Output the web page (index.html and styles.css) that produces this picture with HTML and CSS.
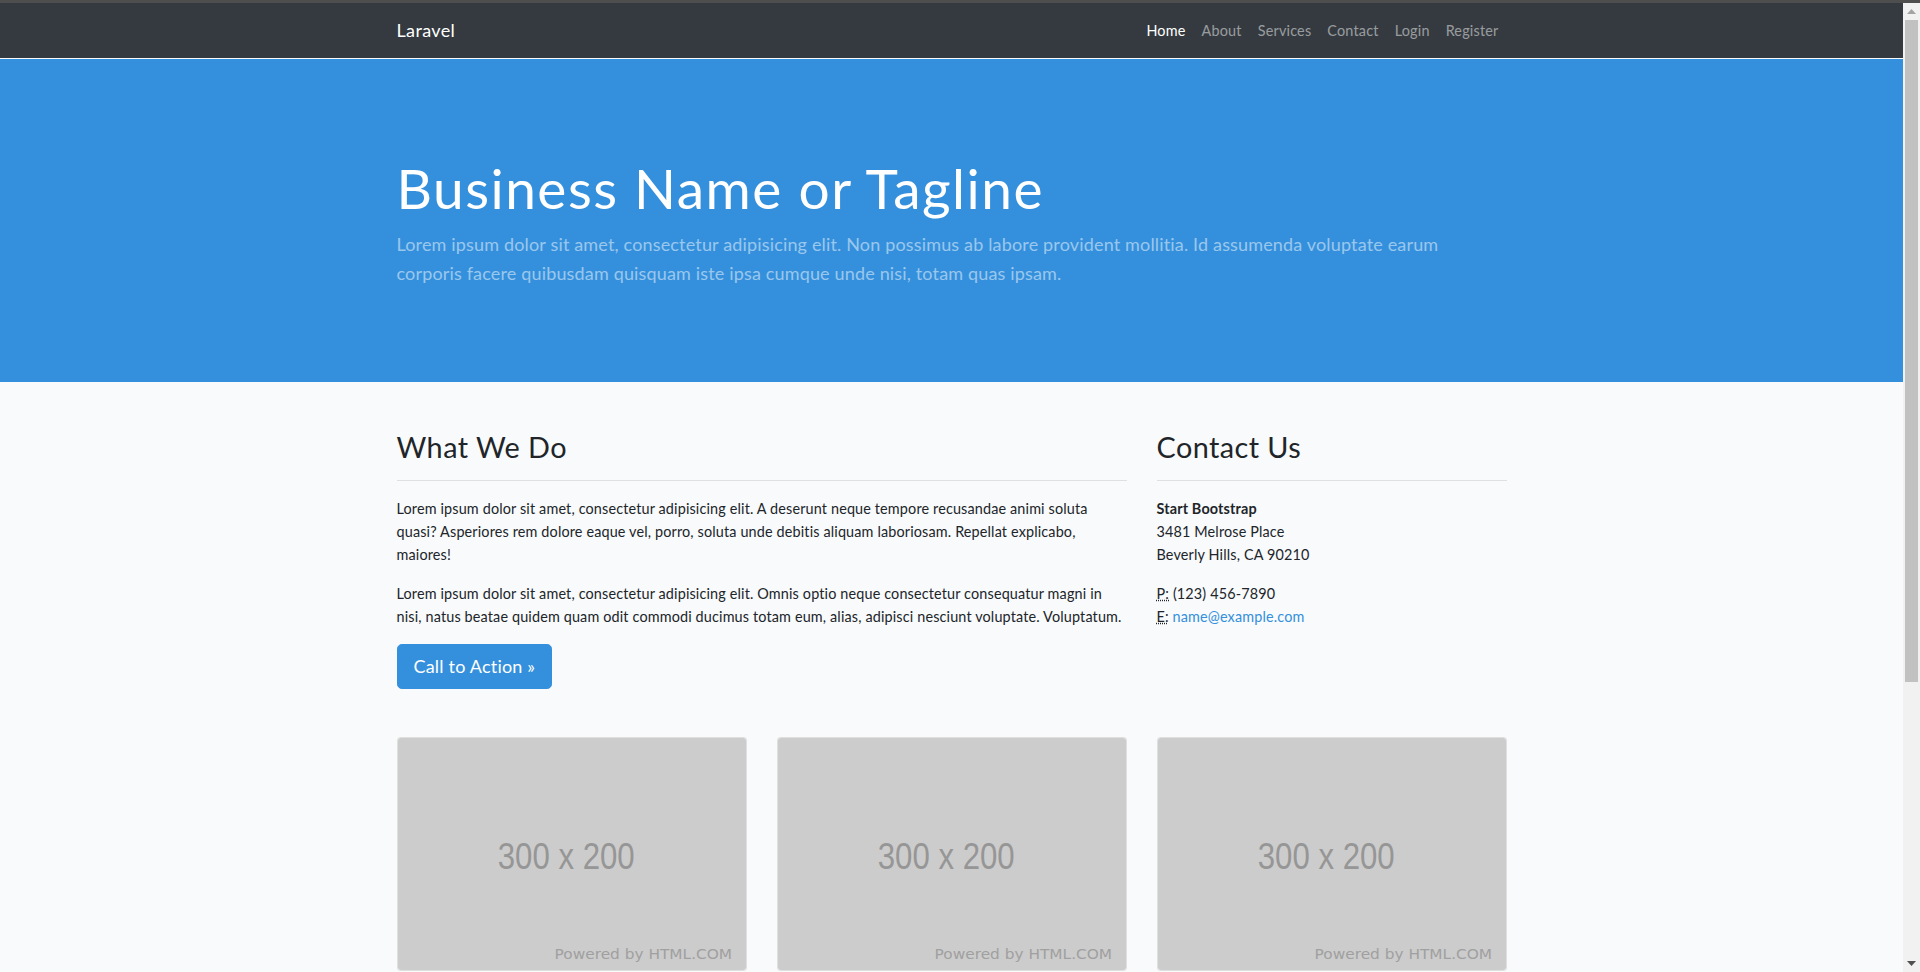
FILE: index.html
```html
<!DOCTYPE html>
<html lang="en">
<head>
<meta charset="utf-8">
<title>Laravel</title>
<link rel="stylesheet" href="styles.css">
</head>
<body>
<div class="topline"></div>
<div class="frame">
  <div class="page">
    <nav class="navbar">
      <div class="container nav-inner">
        <a class="brand" href="#">Laravel</a>
        <ul class="nav">
          <li><a class="active" href="#">Home</a></li>
          <li><a href="#">About</a></li>
          <li><a href="#">Services</a></li>
          <li><a href="#">Contact</a></li>
          <li><a href="#">Login</a></li>
          <li><a href="#">Register</a></li>
        </ul>
      </div>
    </nav>

    <header class="hero">
      <div class="container">
        <h1 class="hero-title">Business Name or Tagline</h1>
        <p class="lead">Lorem ipsum dolor sit amet, consectetur adipisicing elit. Non possimus ab labore provident mollitia. Id assumenda voluptate earum corporis facere quibusdam quisquam iste ipsa cumque unde nisi, totam quas ipsam.</p>
      </div>
    </header>

    <main class="container content">
      <div class="row-top">
        <section class="col">
          <h2>What We Do</h2>
          <hr>
          <p>Lorem ipsum dolor sit amet, consectetur adipisicing elit. A deserunt neque tempore recusandae animi soluta quasi? Asperiores rem dolore eaque vel, porro, soluta unde debitis aliquam laboriosam. Repellat explicabo, maiores!</p>
          <p>Lorem ipsum dolor sit amet, consectetur adipisicing elit. Omnis optio neque consectetur consequatur magni in nisi, natus beatae quidem quam odit commodi ducimus totam eum, alias, adipisci nesciunt voluptate. Voluptatum.</p>
          <a class="btn" href="#">Call to Action &raquo;</a>
        </section>
        <section class="col">
          <h2>Contact Us</h2>
          <hr>
          <address>
            <strong>Start Bootstrap</strong><br>
            3481 Melrose Place<br>
            Beverly Hills, CA 90210
          </address>
          <address>
            <abbr title="Phone">P:</abbr> (123) 456-7890<br>
            <abbr title="Email">E:</abbr> <a href="#">name@example.com</a>
          </address>
        </section>
      </div>

      <div class="cards">
        <div class="card">
          <svg class="ph" viewBox="0 0 300 200" width="348" height="232" aria-label="300 x 200">
            <rect width="300" height="200" fill="#cccccc"/>
            <text x="145" y="113" text-anchor="middle" class="ph-size" textLength="118" lengthAdjust="spacingAndGlyphs">300 x 200</text>
            <text x="288" y="190.5" text-anchor="end" class="ph-by" textLength="153" lengthAdjust="spacingAndGlyphs">Powered by HTML.COM</text>
          </svg>
        </div>
        <div class="card">
          <svg class="ph" viewBox="0 0 300 200" width="348" height="232" aria-label="300 x 200">
            <rect width="300" height="200" fill="#cccccc"/>
            <text x="145" y="113" text-anchor="middle" class="ph-size" textLength="118" lengthAdjust="spacingAndGlyphs">300 x 200</text>
            <text x="288" y="190.5" text-anchor="end" class="ph-by" textLength="153" lengthAdjust="spacingAndGlyphs">Powered by HTML.COM</text>
          </svg>
        </div>
        <div class="card">
          <svg class="ph" viewBox="0 0 300 200" width="348" height="232" aria-label="300 x 200">
            <rect width="300" height="200" fill="#cccccc"/>
            <text x="145" y="113" text-anchor="middle" class="ph-size" textLength="118" lengthAdjust="spacingAndGlyphs">300 x 200</text>
            <text x="288" y="190.5" text-anchor="end" class="ph-by" textLength="153" lengthAdjust="spacingAndGlyphs">Powered by HTML.COM</text>
          </svg>
        </div>
      </div>
    </main>
  </div>

  <div class="scrollbar" aria-hidden="true">
    <div class="sb-btn">
      <svg width="9" height="5" viewBox="0 0 9 5"><path d="M0 5 L4.5 0 L9 5 Z" fill="#a3a3a3"/></svg>
    </div>
    <div class="sb-thumb"></div>
    <div class="sb-space"></div>
    <div class="sb-btn">
      <svg width="9" height="5" viewBox="0 0 9 5"><path d="M0 0 L4.5 5 L9 0 Z" fill="#505050"/></svg>
    </div>
  </div>
</div>
</body>
</html>
```

FILE: styles.css
```css
* { box-sizing: border-box; }

html, body {
  margin: 0;
  height: 972px;
  overflow: hidden;
}

body {
  font-family: Lato, "Noto Sans", sans-serif;
  font-size: 14.4px;
  line-height: 1.6;
  letter-spacing: 0.15px;
  color: #212529;
  background: #f8fafc;
}

.topline {
  height: 3px;
  background: #4e4e4e;
}

.frame {
  display: flex;
  height: 969px;
}

.page {
  flex: 1;
  overflow: hidden;
  background: #f8fafc;
}

.container {
  width: 1140px;
  margin: 0 auto;
  padding: 0 15px;
}

/* Navbar */
.navbar {
  height: 56px;
  background: #343a40;
  border-bottom: 1px solid #f8fafc;
}

.nav-inner {
  height: 100%;
  display: flex;
  align-items: center;
  justify-content: space-between;
}

.brand {
  font-size: 18px;
  letter-spacing: 0.35px;
  color: #fff;
  text-decoration: none;
}

.nav {
  display: flex;
  list-style: none;
  margin: 0;
  padding: 0;
}

.nav a {
  display: block;
  padding: 0 8px;
  letter-spacing: 0.2px;
  color: rgba(255, 255, 255, 0.5);
  text-decoration: none;
}

.nav a.active { color: #fff; }

/* Hero */
.hero {
  background: #3490dc;
  height: 323px;
  padding-top: 96px;
}

.hero-title {
  margin: 0 0 8px;
  font-size: 55px;
  font-weight: 400;
  line-height: 67.2px;
  letter-spacing: 1.5px;
  color: #fff;
}

.lead {
  margin: 0;
  font-size: 18px;
  font-weight: 400;
  line-height: 28.8px;
  letter-spacing: 0.16px;
  color: rgba(255, 255, 255, 0.5);
}

/* Content */
.content {
  padding-top: 48px;
}

.row-top {
  display: grid;
  grid-template-columns: 730px 350px;
  column-gap: 30px;
  margin-bottom: 48px;
}

h2 {
  margin: 0;
  font-size: 28.8px;
  font-weight: 400;
  line-height: 35px;
  letter-spacing: 0.45px;
}

hr {
  margin: 15px 0 16px;
  border: 0;
  border-top: 1px solid rgba(0, 0, 0, 0.1);
}

p {
  margin: 0 0 16px;
  line-height: 23.04px;
}

.btn {
  display: inline-block;
  padding: 8px 16px;
  font-size: 18px;
  line-height: 27px;
  letter-spacing: 0.2px;
  color: #fff;
  background: #3490dc;
  border: 1px solid #3490dc;
  border-radius: 4.8px;
  text-decoration: none;
}

address {
  margin: 0 0 16px;
  font-style: normal;
  line-height: 23.04px;
}

address strong { font-weight: 700; }

abbr {
  text-decoration: underline dotted;
  cursor: help;
}

address a {
  color: #3490dc;
  text-decoration: none;
}

.cards {
  display: grid;
  grid-template-columns: repeat(3, 350px);
  column-gap: 30px;
}

.card {
  border: 1px solid rgba(0, 0, 0, 0.125);
  border-radius: 4px;
  overflow: hidden;
  background: #fff;
}

.ph { display: block; }

.ph-size {
  font-family: "Liberation Sans", Arial, sans-serif;
  font-size: 32px;
  letter-spacing: 0;
  fill: #969696;
}

.ph-by {
  font-family: "DejaVu Sans", "Liberation Sans", sans-serif;
  font-size: 11.5px;
  letter-spacing: 0;
  fill: #a0a0a0;
}

/* Scrollbar */
.scrollbar {
  width: 17px;
  background: #f1f1f1;
  display: flex;
  flex-direction: column;
}

.sb-btn {
  height: 17px;
  display: flex;
  align-items: center;
  justify-content: center;
}

.sb-thumb {
  height: 662px;
  margin: 0 2px;
  background: #c1c1c1;
}

.sb-space { flex: 1; }
```
